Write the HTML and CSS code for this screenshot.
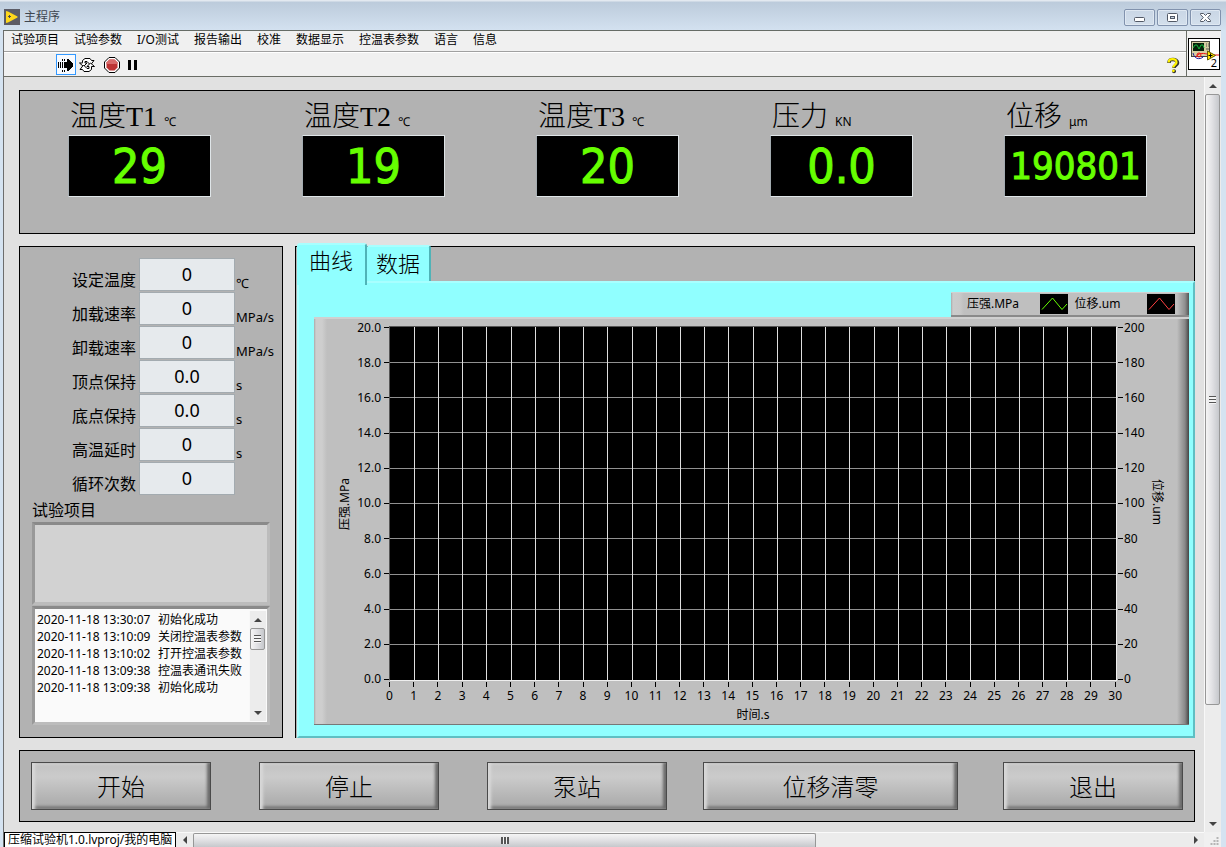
FILE: index.html
```html
<!DOCTYPE html>
<html lang="zh-CN">
<head>
<meta charset="utf-8">
<title>主程序</title>
<link rel="stylesheet" href="styles.css">
</head>
<body>
<header class="titlebar">
  <svg class="app-icon" viewBox="0 0 16 16" aria-hidden="true"><rect width="16" height="16" fill="#5c5c66"/><path d="M2 2v12l2-.5L13.500 8.500v-1L4 2.500z" fill="#ffd81c"/><path d="M4 7.500h3M5.500 6v3" stroke="#4d4d50" fill="none"/></svg>
  <h1 class="title">主程序</h1>
  <div class="window-buttons">
    <button class="window-button" aria-label="最小化"><svg viewBox="0 0 14 12"><rect x="1.500" y="6.500" width="10" height="4" rx="1" fill="#fff" stroke="#525966"/></svg></button>
    <button class="window-button" aria-label="最大化"><svg viewBox="0 0 14 12"><rect x="1.500" y="2.500" width="10" height="8" rx="1" fill="#fff" stroke="#525966"/><rect x="4.500" y="5.500" width="4" height="2" fill="#c7d3e2" stroke="#525966"/></svg></button>
    <button class="window-button" aria-label="关闭"><svg viewBox="0 0 14 12"><path d="M1.500 2.500h3L6.500 4.500l2-2h3v1L8.700 6.500l2.800 3v1h-3l-2-2-2 2h-3v-1l2.800-3-2.800-3z" fill="#fff" stroke="#525966"/></svg></button>
  </div>
</header>
<div class="client">
  <div class="head">
    <div class="bars">
      <nav class="menu">
        <button>试验项目</button><button>试验参数</button><button>I/O测试</button><button>报告输出</button><button>校准</button><button>数据显示</button><button>控温表参数</button><button>语言</button><button>信息</button>
      </nav>
      <div class="tools">
        <button class="tool tool-active" aria-label="运行"><svg viewBox="0 0 18 18" shape-rendering="crispEdges"><path d="M1.500 6v6M3.500 6v6M5.500 2.500v2M7.500 2.500v2M5.500 13.500v2M7.500 13.500v2M5.500 6v6M7.500 6v6" stroke="#000" fill="none"/><path d="M8 6h2V3h1l5 5v2l-5 5h-1v-3H8z" fill="#000"/></svg></button>
        <button class="tool" aria-label="连续运行"><svg viewBox="0 0 18 18"><path d="M4.500 6.500V4.500l2.500-2h5l1.500 2H16L12.500 9 9 5.500H7v1.500h2L5.500 10.500 1.500 7h3z" fill="#fff" stroke="#000"/><path d="M13.500 10.500v3l-2.500 2H6l-1.500-2H2L5.500 9 9 12.500h2v-2H9L12.500 7 16.500 10.500z" fill="#fff" stroke="#000"/></svg></button>
        <button class="tool tool-stop" aria-label="中止执行"><svg viewBox="0 0 18 18"><path d="M6 1.500h6L16.500 6v6L12 16.500H6L1.500 12V6z" fill="#fff" stroke="#000"/><path d="M6.500 3.500h5l3 3v5l-3 3h-5l-3-3v-5z" fill="#bd3434"/><path d="M6.500 3.500h5l3 3V8h-11V6.500z" fill="#d76a6a"/></svg></button>
        <button class="tool" aria-label="暂停"><svg viewBox="0 0 18 18"><path d="M4 4h3v10H4zM10 4h3v10h-3z"/></svg></button>
        <button class="tool tool-help" aria-label="帮助"><svg viewBox="0 0 18 18"><path d="M6 7C6 4 7.500 3.500 10 3.500S14.500 5 14.500 7 11 9.500 11 12" fill="none" stroke="#333" stroke-width="3.600"/><circle cx="11" cy="15.200" r="2" fill="#333"/><path d="M5.700 6.500C5.700 4 7.200 3.200 9.500 3.200S13.500 4.500 13.500 6.400 10.200 9 10.200 11.500" fill="none" stroke="#fff200" stroke-width="2.200"/><circle cx="10.400" cy="14.800" r="1.400" fill="#fff200"/></svg></button>
      </div>
    </div>
    <div class="vi-cell">
      <div class="vi-icon">
        <svg viewBox="0 0 30 30"><rect x="2.500" y="2.500" width="18" height="15" fill="#d5cfa2" stroke="#44443a"/><rect x="4" y="4" width="11" height="8" fill="#06220b"/><path d="M4 9l2-3 2 0 2 4 2-4 2 0 1 3" fill="none" stroke="#13b63c"/><path d="M17 5h1M19 5h1M17 7h1M19 7h1M17 10h3" stroke="#555"/><path d="M4 14c2 8 9 6 11 3" fill="none" stroke="#1a1a9a"/><path d="M7 18c2-4 6-4 11-3M25 16h5" fill="none" stroke="#e11"/><circle cx="10" cy="16" r="2" fill="none" stroke="#e11"/><path d="M18.500 12v9l8-4.500z" fill="#ffe500" stroke="#665c00"/><path d="M19.500 16.500h4M21.500 14.500v4" stroke="#000"/></svg>
        <span class="vi-number">2</span>
      </div>
    </div>
  </div>
  <div class="work">
    <main class="front-panel">
      <section class="panel readouts">
        <div class="readout"><h2>温度T1 <small>℃</small></h2><output>29</output></div>
        <div class="readout"><h2>温度T2 <small>℃</small></h2><output>19</output></div>
        <div class="readout"><h2>温度T3 <small>℃</small></h2><output>20</output></div>
        <div class="readout"><h2>压力 <small>KN</small></h2><output>0.0</output></div>
        <div class="readout"><h2>位移 <small>μm</small></h2><output class="long">190801</output></div>
      </section>
      <div class="middle">
        <section class="panel settings">
          <div class="fields">
            <label for="f1">设定温度</label><input id="f1" value="0"><span>℃</span>
            <label for="f2">加载速率</label><input id="f2" value="0"><span>MPa/s</span>
            <label for="f3">卸载速率</label><input id="f3" value="0"><span>MPa/s</span>
            <label for="f4">顶点保持</label><input id="f4" value="0.0"><span>s</span>
            <label for="f5">底点保持</label><input id="f5" value="0.0"><span>s</span>
            <label for="f6">高温延时</label><input id="f6" value="0"><span>s</span>
            <label for="f7">循环次数</label><input id="f7" value="0"><span></span>
          </div>
          <label class="project-label" for="project">试验项目</label>
          <textarea class="well project" id="project"></textarea>
          <div class="well log">
            <ul>
              <li><time>2020-11-18 13:30:07</time> 初始化成功</li>
              <li><time>2020-11-18 13:10:09</time> 关闭控温表参数</li>
              <li><time>2020-11-18 13:10:02</time> 打开控温表参数</li>
              <li><time>2020-11-18 13:09:38</time> 控温表通讯失败</li>
              <li><time>2020-11-18 13:09:38</time> 初始化成功</li>
            </ul>
            <div class="scroll scroll-v scroll-log"><i class="arrow up"></i><div class="thumb"><i class="grip"></i></div><div class="rest"></div><i class="arrow down"></i></div>
          </div>
        </section>
        <section class="panel tabs-panel">
          <div class="tabs" role="tablist">
            <button class="tab tab-selected" role="tab" aria-selected="true">曲线</button><button class="tab" role="tab" aria-selected="false">数据</button>
          </div>
          <div class="tab-body">
            <div class="legend">
              <span class="legend-name">压强.MPa</span><svg class="swatch green" viewBox="0 0 28 20"><path d="M2 15.500L12.500 4 22 15.500 27 10"/></svg>
              <span class="legend-name">位移.um</span><svg class="swatch red" viewBox="0 0 28 20"><path d="M2 15.500L12.500 4 22 15.500 27 10"/></svg>
            </div>
            <div class="chart">
              <div class="axis-left">
                <span class="axis-title axis-title-left">压强.MPa</span>
                <ol class="scale scale-left"><li>20.0</li><li>18.0</li><li>16.0</li><li>14.0</li><li>12.0</li><li>10.0</li><li>8.0</li><li>6.0</li><li>4.0</li><li>2.0</li><li>0.0</li></ol>
              </div>
              <svg class="plot" viewBox="0 0 30 10" preserveAspectRatio="none">
                <path class="grid-h" d="M0 1h30M0 2h30M0 3h30M0 4h30M0 5h30M0 6h30M0 7h30M0 8h30M0 9h30"/>
                <path class="grid-v" d="M1 0v10M2 0v10M3 0v10M4 0v10M5 0v10M6 0v10M7 0v10M8 0v10M9 0v10M10 0v10M11 0v10M12 0v10M13 0v10M14 0v10M15 0v10M16 0v10M17 0v10M18 0v10M19 0v10M20 0v10M21 0v10M22 0v10M23 0v10M24 0v10M25 0v10M26 0v10M27 0v10M28 0v10M29 0v10"/>
              </svg>
              <div class="axis-right">
                <ol class="scale scale-right"><li>200</li><li>180</li><li>160</li><li>140</li><li>120</li><li>100</li><li>80</li><li>60</li><li>40</li><li>20</li><li>0</li></ol>
                <span class="axis-title">位移.um</span>
              </div>
              <div class="axis-bottom">
                <ol class="scale-bottom"><li>0</li><li>1</li><li>2</li><li>3</li><li>4</li><li>5</li><li>6</li><li>7</li><li>8</li><li>9</li><li>10</li><li>11</li><li>12</li><li>13</li><li>14</li><li>15</li><li>16</li><li>17</li><li>18</li><li>19</li><li>20</li><li>21</li><li>22</li><li>23</li><li>24</li><li>25</li><li>26</li><li>27</li><li>28</li><li>29</li><li>30</li></ol>
                <span class="time-title">时间.s</span>
              </div>
            </div>
          </div>
        </section>
      </div>
      <section class="panel commands">
        <button>开始</button><i></i><button>停止</button><i></i><button>泵站</button><i></i><button>位移清零</button><i></i><button>退出</button>
      </section>
    </main>
    <div class="scroll scroll-v scroll-main"><i class="arrow up"></i><div class="thumb"><i class="grip"></i></div><div class="rest"></div><i class="arrow down"></i></div>
  </div>
  <footer class="status">
    <span class="project-path">压缩试验机1.0.lvproj/我的电脑</span>
    <div class="scroll scroll-h"><i class="arrow left"></i><div class="thumb"><i class="grip"></i></div><div class="rest"></div><i class="arrow right"></i></div>
    <svg class="size-grip" viewBox="0 0 16 15"><path d="M12 5h2v2h-2zM9 8h2v2H9zM12 8h2v2h-2zM6 11h2v2H6zM9 11h2v2H9zM12 11h2v2h-2z" fill="#b5b5b5"/></svg>
  </footer>
</div>
</body>
</html>
```
FILE: styles.css
```css
* { box-sizing: border-box; }
body {
  margin: 0;
  height: 100vh;
  min-width: 1000px;
  display: flex;
  flex-direction: column;
  padding: 0 5px 0 3px;
  overflow: hidden;
  background: #d5e3f1;
  color: #000;
  font: 12px/16px "Noto Sans", "Noto Sans CJK SC", sans-serif;
}
button, input, textarea { font: inherit; color: inherit; border: 0; padding: 0; margin: 0; background: none; border-radius: 0; }
ul, ol { list-style: none; margin: 0; padding: 0; }
h1, h2 { margin: 0; font-weight: 400; }
svg { display: block; }

/* Window frame */
.titlebar {
  flex: none;
  height: 30px;
  display: flex;
  align-items: center;
  gap: 4px;
  margin: 0 -5px 0 -3px;
  padding: 4px 5px 0 4px;
  background: linear-gradient(#e3e9f0 0, #e3e9f0 1px, #bccbdb 2px, #d3e1f0 100%);
}
.app-icon { width: 16px; height: 16px; }
.title { font-size: 12px; color: #3f4650; flex: 1; }
.window-buttons { display: flex; gap: 2px; }
.window-button {
  width: 31px;
  height: 17px;
  display: grid;
  place-items: center;
  border: 1px solid #8192ad;
  border-radius: 2px;
  background: linear-gradient(#c9d6e5, #d3dfec);
  box-shadow: inset 0 0 0 1px #dfe8f2;
}
.window-button svg { width: 14px; height: 12px; }
.client {
  flex: 1;
  min-height: 0;
  display: flex;
  flex-direction: column;
  border-left: 1px solid #6d6d6d;
  border-top: 1px solid #666c66;
  background: #f0f0f0;
}

/* Menu and tools */
.head { flex: none; display: flex; border-bottom: 1px solid #6a6d66; }
.bars { flex: 1; }
.menu { display: flex; gap: 15px; height: 21px; padding: 1px 7px 3px; border-bottom: 1px solid #a0a0a0; }
.menu button { line-height: 16px; }
.tools { height: 24px; display: flex; align-items: center; padding: 0 4px 0 52px; border-top: 1px solid #fff; }
.tool { width: 20px; height: 21px; display: grid; place-items: center; margin-right: 2px; }
.tool svg { width: 18px; height: 18px; }
.tool:nth-child(2) { margin-left: -1px; }
.tool-active { border: 1px solid #3399ff; background: #f7faff; }
.tool-stop { margin-left: 3px; margin-right: 1px; }
.tool-help { margin-left: auto; margin-right: 0; }
.vi-cell { width: 35px; border-left: 1px solid #6a6d66; display: flex; align-items: center; justify-content: center; }
.vi-icon { position: relative; width: 32px; height: 32px; border: 1px solid #000; background: #fff; }
.vi-number { position: absolute; right: 2px; bottom: 0; font-size: 11px; line-height: 12px; }

.work { flex: 1; min-height: 0; display: flex; }
.front-panel {
  flex: 1;
  min-width: 0;
  display: flex;
  flex-direction: column;
  gap: 12px;
  padding: 13px 9px 10px 15px;
  background: #e1e1e1;
}
.panel { background: #b2b2b2; border: 1px solid #000; }

/* Readouts */
.readouts { flex: none; height: 144px; display: flex; justify-content: space-between; padding: 7px 47px 0 48px; }
.readout { width: 143px; }
.readout h2 {
  padding-left: 2px;
  font: 300 28px/37px "Liberation Serif", "Noto Sans CJK SC", serif;
  white-space: nowrap;
}
.readout small { font: 400 12px/16px "Noto Sans", "Noto Sans CJK SC", sans-serif; }
.readout output {
  height: 62px;
  display: flex;
  align-items: center;
  justify-content: center;
  overflow: hidden;
  border: 1px solid #dfe5e8;
  border-left-color: #a3abb0;
  background: #000;
  color: #6f0;
  font: 400 48px/60px "DejaVu Sans Condensed", "DejaVu Sans Mono", sans-serif;
  -webkit-text-stroke: 1px #6f0;
}
.readout .long { font-size: 38px; }

/* Settings */
.middle { flex: 1; min-height: 0; display: grid; grid-template-columns: 264px 1fr; gap: 12px; }
.settings { display: flex; flex-direction: column; padding: 11px 12px 12px; }
.fields { display: grid; grid-template-columns: 107px 96px 1fr; grid-auto-rows: 33px; row-gap: 1px; }
.fields label { font-size: 16px; line-height: 22px; align-self: end; text-align: right; padding-right: 3px; }
.fields input { width: 96px; height: 33px; padding-bottom: 2px; border: 1px solid #a3abb0; background: #e6eaed; text-align: center; font-size: 18px; }
.fields span { font-size: 13px; line-height: 16px; align-self: end; padding-left: 1px; }
.project-label { font-size: 16px; line-height: 24px; margin-top: 3px; }
.well { border: 3px solid; border-color: #8a8a8a #bcbcbc #bcbcbc #999; width: 238px; }
.project { display: block; height: 83px; background: #d2d2d2; resize: none; }
.log { flex: 1; min-height: 0; display: flex; margin-top: 1px; background: #fafafa; padding: 2px 1px 1px 2px; }
.log ul { flex: 1; overflow: hidden; white-space: nowrap; }
.log li { line-height: 17px; }
.log time { display: inline-block; width: 118px; }

/* Tabs */
.tabs-panel { display: flex; flex-direction: column; min-width: 0; border-bottom: 0; padding-left: 1px; }
.tabs { flex: none; height: 34px; display: flex; align-items: flex-start; margin-right: -1px; }
.tab {
  height: 37px;
  width: 64px;
  margin-top: -2px;
  padding-bottom: 6px;
  background: #90ffff;
  border-top: 2px solid #a8ffff;
  border-right: 2px solid #4fb3b7;
  border-radius: 3px 3px 0 0;
  font: 300 22px/28px "Noto Sans CJK SC", sans-serif;
}
.tab-selected { position: relative; width: 70px; height: 42px; margin-top: -4px; padding-bottom: 12px; }
.tab-body {
  flex: 1;
  min-height: 0;
  display: flex;
  flex-direction: column;
  margin-right: -1px;
  padding: 9px 4px 11px 15px;
  background: #90ffff;
  border: 2px solid;
  border-color: #a8ffff #5fbfc3 #5fbfc3 #a8ffff;
}
.legend {
  flex: none;
  align-self: flex-end;
  width: 238px;
  height: 25px;
  display: flex;
  align-items: center;
  padding: 0 14px 0 16px;
  border-top: 1px solid #d2d2d2;
  border-bottom: 2px solid #8a8a8a;
  background: linear-gradient(90deg, #aaa 0, #ccc 2px, #c9c9c9 9px, #bfbfbf 13px, #bfbfbf 226px, #8f8f8f 234px, #555 100%);
}
.legend-name { flex: 1; }
.swatch { width: 28px; height: 20px; background: #000; fill: none; margin-right: 7px; }
.swatch:last-child { margin-right: 0; }
.green { stroke: #6f0; }
.red { stroke: #ff4040; }
.chart {
  flex: 1;
  min-height: 0;
  display: grid;
  grid-template-columns: 75px 1fr 72px;
  grid-template-rows: 1fr 43px;
  padding-top: 7px;
  border-top: 2px solid #d0d0d0;
  border-bottom: 1px solid #777;
  background:
    linear-gradient(90deg, #aaa, #cecece 2px, #cecece 8px, #bfbfbf 13px) left / 13px 100% no-repeat,
    linear-gradient(90deg, #bfbfbf, #888 8px, #444) right / 12px 100% no-repeat,
    #bfbfbf;
}
.plot { width: 100%; height: 100%; background: #000; border: 1px solid; border-color: #555 #eee #eee #555; fill: none; shape-rendering: crispEdges; }
.plot path { vector-effect: non-scaling-stroke; stroke-width: 1px; }
.grid-h { stroke: #909090; }
.grid-v { stroke: #dedede; }
.axis-left, .axis-right { display: flex; justify-content: space-between; align-items: center; padding: 1px 0; }
.axis-left { padding-left: 23px; }
.axis-right { padding-right: 24px; }
.scale { align-self: stretch; display: flex; flex-direction: column; justify-content: space-between; }
.scale li { display: flex; align-items: center; height: 1px; gap: 3px; white-space: nowrap; }
.scale-left li { justify-content: flex-end; }
.scale-left li::after, .scale-right li::before { content: ""; width: 5px; height: 1px; background: #000; }
.scale-right li { gap: 1px; padding-left: 1px; }
.axis-title { writing-mode: vertical-rl; text-orientation: sideways; white-space: nowrap; padding-bottom: 3px; }
.axis-title-left { transform: rotate(180deg); padding: 0 0 2px; }
.axis-bottom { grid-column: 2; display: flex; flex-direction: column; align-items: center; }
.scale-bottom { align-self: stretch; display: flex; justify-content: space-between; padding: 1px 1px 0 0; }
.scale-bottom li { width: 1px; display: flex; flex-direction: column; align-items: center; line-height: 17px; }
.scale-bottom li::before { content: ""; flex: none; width: 1px; height: 5px; background: #000; }
.time-title { line-height: 22px; }

/* Command buttons */
.commands { flex: none; height: 72px; display: grid; grid-template-columns: 180fr 48fr 180fr 48fr 180fr 36fr 255fr 45fr 180fr; padding: 11px; }
.commands button {
  height: 48px;
  border: 1px solid #4a4a4a;
  background: linear-gradient(#c2c2c2, #cbcbcb 30%, #afafaf 85%, #b5b5b5);
  box-shadow: inset 4px 0 3px -1px #d8d8d8, inset -4px 0 3px -1px #6a6a6a, inset 0 3px 2px -1px #d2d2d2, inset 0 -4px 3px -1px #777;
  font: 300 24px/44px "Noto Sans CJK SC", sans-serif;
}

/* Scroll bars */
.scroll { display: flex; background: #ececec; }
.scroll-v { flex: none; flex-direction: column; width: 17px; border-left: 1px solid #f8f8f8; }
.arrow { flex: none; display: grid; place-items: center; width: 17px; height: 17px; }
.scroll-v .arrow { width: 16px; }
.arrow::before { content: ""; border: 4px solid transparent; }
.up::before { border-bottom-color: #444; border-top: 0; }
.down::before { border-top-color: #444; border-bottom: 0; }
.left::before { border-right-color: #444; border-left: 0; }
.right::before { border-left-color: #444; border-right: 0; }
.thumb { display: grid; place-items: center; border: 1px solid #979797; border-radius: 2px; }
.scroll-v .thumb { width: 15px; background: linear-gradient(90deg, #f5f5f5, #e2e2e5 45%, #c6c8cc); }
.scroll-v .grip { width: 7px; height: 8px; background: repeating-linear-gradient(#555 0, #555 1px, #f4f4f4 1px, #f4f4f4 3px); }
.scroll-main .thumb { flex: 611; }
.scroll-main .rest { flex: 110; }
.scroll-log .thumb { height: 22px; }
.scroll-log .rest { flex: 1; }
.status { flex: none; height: 15px; display: flex; }
.project-path { flex: none; padding: 0 3px; line-height: 14px; background: #fff; border: 1px solid #000; border-bottom: 0; }
.scroll-h { flex: 1; border-top: 1px solid #fafafa; }
.scroll-h .arrow { height: 14px; }
.scroll-h .thumb { flex: 622; border-bottom: 0; border-radius: 2px 2px 0 0; background: linear-gradient(#f5f5f5, #e2e2e5 45%, #c6c8cc); }
.scroll-h .rest { flex: 372; }
.scroll-h .grip { width: 8px; height: 7px; background: repeating-linear-gradient(90deg, #555 0, #555 2px, #f4f4f4 2px, #f4f4f4 3px); }
.size-grip { flex: none; width: 17px; height: 15px; }
```
